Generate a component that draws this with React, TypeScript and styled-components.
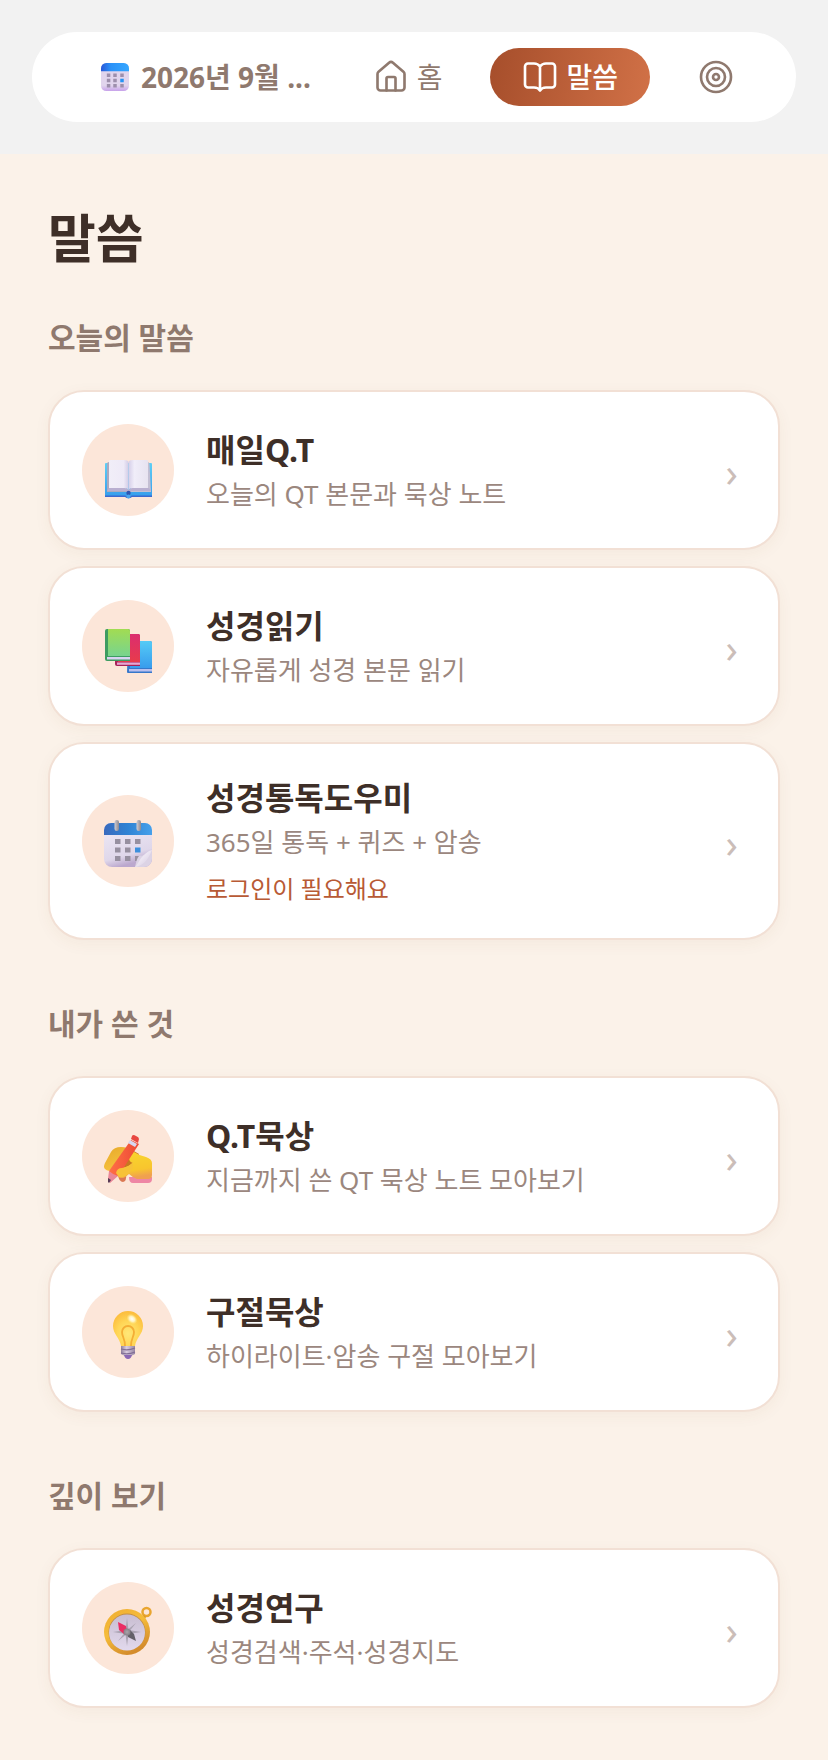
import React from "react";
import styled, { createGlobalStyle } from "styled-components";
import { House, Target } from "lucide-react";

const GlobalStyle = createGlobalStyle`
  *, *::before, *::after { box-sizing: border-box; }
  body {
    margin: 0;
    background: #fbf2e9;
    color: #3e2f28;
    font-family: "Noto Sans", "Noto Sans CJK KR", sans-serif;
  }
  h1, h2, h3, p, ul { margin: 0; padding: 0; }
  button { font: inherit; border: 0; background: none; cursor: pointer; }
`;

const Page = styled.div`
  min-height: 100vh;
  background: #fbf2e9;
`;

const TopBar = styled.header`
  padding: 32px;
  background: #f2f2f2;
`;

const Nav = styled.nav`
  display: flex;
  align-items: center;
  gap: 16px;
  height: 90px;
  padding: 16px 30px 16px 32px;
  border-radius: 45px;
  background: #fff;
`;

const NavButton = styled.button<{ $active?: boolean }>`
  display: flex;
  align-items: center;
  gap: 8px;
  height: 58px;
  padding: 0 32px;
  border-radius: 29px;
  font-size: 28px;
  line-height: 40px;
  font-weight: ${(p) => (p.$active ? 500 : 400)};
  color: ${(p) => (p.$active ? "#fff" : "#8f796e")};
  && { background: ${(p) => (p.$active ? "linear-gradient(100deg, #a64e2b, #d17147)" : "none")}; }
`;

const DateButton = styled(NavButton)`
  flex: 1;
  min-width: 0;
  gap: 12px;
  padding: 0 0 0 37px;
  font-weight: 700;
  white-space: nowrap;
`;

const Main = styled.main`
  padding: 48px 48px 54px;
`;

const PageTitle = styled.h1`
  margin-bottom: 44px;
  font-size: 52px;
  line-height: 72px;
  font-weight: 700;
`;

const Section = styled.section`
  & + & { margin-top: 64px; }
`;

const SectionTitle = styled.h2`
  margin-bottom: 32px;
  font-size: 30px;
  line-height: 40px;
  font-weight: 600;
  color: #8f796e;
`;

const CardList = styled.ul`
  display: flex;
  flex-direction: column;
  gap: 16px;
  list-style: none;
`;

const Card = styled.a`
  display: flex;
  align-items: center;
  gap: 32px;
  padding: 32px;
  border: 2px solid #f2e0d5;
  border-radius: 36px;
  background: #fff;
  box-shadow: 0 4px 16px rgba(120, 70, 40, 0.05);
  color: inherit;
  text-decoration: none;
`;

const IconCircle = styled.span`
  display: flex;
  flex: none;
  align-items: center;
  justify-content: center;
  width: 92px;
  height: 92px;
  padding-top: 6px;
  border-radius: 50%;
  background: #fce6d9;
`;

const CardText = styled.div`
  flex: 1;
  min-width: 0;
`;

const CardTitle = styled.h3`
  font-size: 32px;
  line-height: 44px;
  font-weight: 700;
`;

const CardDescription = styled.p`
  margin-top: 4px;
  font-size: 26px;
  line-height: 36px;
  color: #9b877e;
`;

const CardNote = styled.p`
  margin-top: 12px;
  font-size: 24px;
  line-height: 34px;
  color: #b85a35;
`;

const Chevron = styled.span`
  padding: 4px 8px 0;
  font-size: 40px;
  line-height: 48px;
  color: #cbbdb8;
`;

const OpenBook = () => (
  <svg
    width="36"
    height="36"
    viewBox="0 0 24 24"
    fill="none"
    stroke="currentColor"
    strokeWidth="1.750"
    strokeLinecap="round"
    strokeLinejoin="round"
    aria-hidden="true"
  >
    <path d="M12 5C11 3.600 9.600 3 8 3H4a2 2 0 0 0-2 2v12a2 2 0 0 0 2 2h4c1.700 0 3.200.6 4 2 .8-1.400 2.300-2 4-2h4a2 2 0 0 0 2-2V5a2 2 0 0 0-2-2h-4c-1.600 0-3 .6-4 2zv16" />
  </svg>
);

const Emoji = ({ size = 48, children }: { size?: number; children: React.ReactNode }) => (
  <svg width={size} height={size} viewBox="0 0 48 48" overflow="visible" aria-hidden="true">
    {children}
  </svg>
);

const DateEmoji = () => (
  <Emoji size={28}>
    <defs>
      <linearGradient id="dateTop">
        <stop stopColor="#2858d8" />
        <stop offset=".35" stopColor="#2b92f8" />
        <stop offset="1" stopColor="#35a7ff" />
      </linearGradient>
      <linearGradient id="dateBody" x2="0" y2="1">
        <stop offset=".8" stopColor="#e1d5ed" />
        <stop offset="1" stopColor="#c7a2ea" />
      </linearGradient>
    </defs>
    <rect width="48" height="48" rx="9" fill="url(#dateBody)" />
    <path d="M0 14V9a9 9 0 0 1 9-9h30a9 9 0 0 1 9 9v5z" fill="url(#dateTop)" />
    {[18, 27, 36].map((y) =>
      [10, 21, 33].map((x) => (
        <rect key={`${x}-${y}`} x={x} y={y} width="6" height="6" fill={x === 33 && y === 27 ? "#2694f5" : "#9d8fac"} />
      )),
    )}
  </Emoji>
);

const OpenBookEmoji = () => (
  <Emoji>
    <defs>
      <linearGradient id="bookCover" x2="0" y2="1">
        <stop stopColor="#5fcff5" />
        <stop offset="1" stopColor="#359cec" />
      </linearGradient>
      <linearGradient id="pageLeft">
        <stop stopColor="#f1eef8" />
        <stop offset=".75" stopColor="#eeeaf7" />
        <stop offset="1" stopColor="#d3cce6" />
      </linearGradient>
      <linearGradient id="pageRight">
        <stop stopColor="#d5cee8" />
        <stop offset=".3" stopColor="#f0edf9" />
        <stop offset="1" stopColor="#e7e3f0" />
      </linearGradient>
    </defs>
    <path d="M2 14h45a1 1 0 0 1 1 1v32H28q-3.500 3-7 0H1V15a1 1 0 0 1 1-1z" fill="url(#bookCover)" />
    <path d="M1 46.500h20q3.500 2 7 0h20V48H28q-3.500 2.500-7 0H1z" fill="#3b69cf" />
    <path d="M3 15q0-2 2-2v27h18.500v3H3z" fill="#aba9bf" />
    <path d="M45.500 15q0-2-2-2v27H26v3h21z" fill="#c4bfd3" />
    <path d="M5 39h17l2.500 2 2.500-2h18l2 3H28l-3.500 2-3.500-2H3z" fill="#b9afd0" />
    <path d="M5 12q0-1 1-1h14q4 0 4.500 2v28q-1-2-4-2H5z" fill="url(#pageLeft)" />
    <path d="M44 12q0-1-1-1H29q-4 0-4.500 2v28q1-2 4-2H44z" fill="url(#pageRight)" />
    <circle cx="24.500" cy="44" r="2.200" fill="#2e55b0" />
    <circle cx="24.500" cy="47.500" r="2" fill="#48a4ed" />
  </Emoji>
);

const BooksEmoji = () => (
  <Emoji>
    <defs>
      <linearGradient id="bookBlue" x2="0" y2="1">
        <stop stopColor="#55cbf6" />
        <stop offset="1" stopColor="#389ced" />
      </linearGradient>
      <linearGradient id="bookRed" x2="0" y2="1">
        <stop stopColor="#db2d70" />
        <stop offset="1" stopColor="#e83b4b" />
      </linearGradient>
      <linearGradient id="bookGreen" x2="0" y2="1">
        <stop stopColor="#a2dc52" />
        <stop offset="1" stopColor="#78d48e" />
      </linearGradient>
    </defs>
    <path d="M24 16h22a2 2 0 0 1 2 2v30H24a1 1 0 0 1-1-1z" fill="#3677ca" />
    <path d="M26 16h20a2 2 0 0 1 2 2v25H26z" fill="url(#bookBlue)" />
    <path d="M25 44h23v2.500H25z" fill="#b8bfef" />
    <path d="M11 9h23a2 2 0 0 1 2 2v30H13a2 2 0 0 1-2-2z" fill="#a92158" />
    <path d="M14 9h20a2 2 0 0 1 2 2v26H14z" fill="url(#bookRed)" />
    <path d="M13 37.500h23v2.300H13z" fill="#e6a8d2" />
    <path d="M3 4h21a2 2 0 0 1 2 2v30H3a2 2 0 0 1-2-2V6a2 2 0 0 1 2-2z" fill="#3e9c62" />
    <path d="M4 4h20a2 2 0 0 1 2 2v25H4z" fill="url(#bookGreen)" />
    <path d="M3 32h23v2.500H3z" fill="#d9d3f1" />
  </Emoji>
);

const CalendarEmoji = () => (
  <Emoji>
    <defs>
      <linearGradient id="calTop">
        <stop stopColor="#3869bd" />
        <stop offset=".5" stopColor="#2f83d4" />
        <stop offset="1" stopColor="#45a0eb" />
      </linearGradient>
      <linearGradient id="calBody" x2=".3" y2="1">
        <stop stopColor="#f0ebf6" />
        <stop offset=".8" stopColor="#dfd7ea" />
        <stop offset="1" stopColor="#bba8ce" />
      </linearGradient>
      <linearGradient id="calRing">
        <stop stopColor="#d0ccd2" />
        <stop offset="1" stopColor="#8c8891" />
      </linearGradient>
      <linearGradient id="calFold" x2="1" y2="1">
        <stop stopColor="#c9bcd5" />
        <stop offset=".45" stopColor="#ece6f2" />
        <stop offset="1" stopColor="#d0c5de" />
      </linearGradient>
    </defs>
    <path d="M0 10a7 7 0 0 1 7-7h34a7 7 0 0 1 7 7v29a8 8 0 0 1-8 8H8a8 8 0 0 1-8-8z" fill="url(#calBody)" />
    <path d="M0 15v-5a7 7 0 0 1 7-7h34a7 7 0 0 1 7 7v5z" fill="url(#calTop)" />
    {[19, 27.5, 36].map((y) =>
      [11, 21, 31].map((x) => (
        <rect key={`${x}-${y}`} x={x} y={y} width="5.500" height="5" fill={x === 31 && y === 27.5 ? "#3c8fdd" : "#9790a0"} />
      )),
    )}
    <path d="M31 47c1-4 2-9 4-11 3-1 6 1 13-6v9a8 8 0 0 1-8 8z" fill="#dcd3e5" />
    <path d="M48 30c-4 1-8 4-11 8-2 3-3 6-6 9 8-1 13-7 17-17z" fill="url(#calFold)" />
    <rect x="10.500" width="4.500" height="11" rx="2.200" fill="url(#calRing)" />
    <rect x="32.500" width="4.500" height="11" rx="2.200" fill="url(#calRing)" />
  </Emoji>
);

const WritingEmoji = () => (
  <Emoji>
    <defs>
      <linearGradient id="handBack" x2=".5" y2="1">
        <stop stopColor="#e7a92a" />
        <stop offset="1" stopColor="#f7c340" />
      </linearGradient>
      <linearGradient id="handFront" x2=".2" y2="1">
        <stop stopColor="#f8d72e" />
        <stop offset=".75" stopColor="#f8c52e" />
        <stop offset="1" stopColor="#f0a050" />
      </linearGradient>
      <linearGradient id="pencil">
        <stop stopColor="#ff7045" />
        <stop offset="1" stopColor="#ec4935" />
      </linearGradient>
    </defs>
    <path d="M25 42h23v2q0 4-4 4H29q-4 0-4-6z" fill="#ee86a4" />
    <path d="M14 40l8-1q1 7-3 8-4 0-5-7z" fill="#db7853" />
    <path d="M1 34q-2-2 0-6l6-11q3-5 10-5 7 0 10 4l1 17-10 3-5-7-6 6q-3 2-6-1z" fill="url(#handBack)" />
    <path d="M13 31q3-7 7-12l8-4 7 4-4 11-14 7z" fill="#c87821" />
    <path d="M25 19q1-3 5-2 6 4 12 5 6 2 6 6v12q0 4-4 4H33q-5-2-8-5-3 3-6 4-6 0-6-4 0-5 6-6 5-1 10-5-4-1-4-5z" fill="url(#handFront)" />
    <path d="M27 5l8 4-20 31-9 5-1-9z" fill="url(#pencil)" />
    <path d="M5 36q3 3 9 5l-8 7-2-4z" fill="#e98798" />
    <path d="M4 43l3 2-2 3-1-1z" fill="#563954" />
    <path d="M26 5l7 4-2 3-7-4z" fill="#d8d7f0" />
    <path d="M28 1q1-2 4 0 3 1 3 3l-1 4-7-4z" fill="#e84741" />
    <path d="M12 38q1-5 6-5 7-1 11-6 1 8-6 13-4 3-8 2z" fill="#f7c238" />
  </Emoji>
);

const BulbEmoji = () => (
  <Emoji>
    <defs>
      <radialGradient id="bulbGlass" cx=".5" cy=".65" r=".65">
        <stop stopColor="#ffe778" />
        <stop offset=".55" stopColor="#ffd656" />
        <stop offset="1" stopColor="#fcbc3c" />
      </radialGradient>
      <radialGradient id="bulbShine">
        <stop stopColor="#fff" />
        <stop offset=".5" stopColor="#fff3be" />
        <stop offset="1" stopColor="#ffe887" stopOpacity="0" />
      </radialGradient>
      <linearGradient id="bulbBase">
        <stop stopColor="#8f7f9d" />
        <stop offset=".4" stopColor="#d9cce0" />
        <stop offset="1" stopColor="#9686a4" />
      </linearGradient>
    </defs>
    <path d="M24 0a15 15 0 0 1 15 15c0 8-7 12-8 20H17c-1-8-8-12-8-20A15 15 0 0 1 24 0z" fill="url(#bulbGlass)" />
    <path d="M21 35c0-8-3-9-3-14a6 6 0 0 1 12 0c0 5-3 6-3 14" fill="none" stroke="#f4ae35" strokeWidth="1.800" />
    <ellipse cx="28" cy="8" rx="6" ry="4.500" transform="rotate(40 28 8)" fill="url(#bulbShine)" />
    <path d="M17 35h14v8l-4 2q-1 3-3 3t-3-3l-4-2z" fill="url(#bulbBase)" />
    <path d="M17 38q7 2 14-1M17 42q7 2 14-1" fill="none" stroke="#806e95" strokeWidth="1.200" />
    <path d="M20 44h8q-1 4-4 4t-4-4z" fill="#8b68b4" />
  </Emoji>
);

const CompassEmoji = () => (
  <Emoji>
    <defs>
      <linearGradient id="compassGold" x2=".5" y2="1">
        <stop stopColor="#efad32" />
        <stop offset=".5" stopColor="#f5bc39" />
        <stop offset="1" stopColor="#d48c2c" />
      </linearGradient>
      <linearGradient id="compassFace" x2="0" y2="1">
        <stop stopColor="#c8bdd1" />
        <stop offset="1" stopColor="#e2d9ed" />
      </linearGradient>
      <radialGradient id="compassHub">
        <stop stopColor="#aaa4ab" />
        <stop offset="1" stopColor="#858087" />
      </radialGradient>
    </defs>
    <circle cx="42.500" cy="5" r="4" fill="none" stroke="#e9a52f" strokeWidth="2.500" />
    <path d="M37 10l3-2 2 2-2 4z" fill="#dc982a" />
    <circle cx="23" cy="25" r="23" fill="url(#compassGold)" />
    <circle cx="23" cy="25" r="18.500" fill="#c08c48" />
    <circle cx="23" cy="25.500" r="18" fill="url(#compassFace)" />
    <path d="M23 11l1.500 12 12.500 2-12.500 2L23 39l-1.500-12L9 25l12.500-2z" fill="#aaa3b2" />
    <path d="M32 16l-8 10-2-2zM14 34l8-10 2 2z" fill="#aaa3b2" />
    <path d="M14 15l8 4 1 5-3 3-5-4z" fill="#ea2d63" />
    <path d="M32 34l-8-4-1-5 3-2 4 4z" fill="#636068" />
    <circle cx="23" cy="25" r="3.500" fill="url(#compassHub)" />
  </Emoji>
);

type Item = { title: string; description: string; note?: string; icon: React.ReactNode };

const sections: { title: string; items: Item[] }[] = [
  {
    title: "오늘의 말씀",
    items: [
      { title: "매일Q.T", description: "오늘의 QT 본문과 묵상 노트", icon: <OpenBookEmoji /> },
      { title: "성경읽기", description: "자유롭게 성경 본문 읽기", icon: <BooksEmoji /> },
      {
        title: "성경통독도우미",
        description: "365일 통독 + 퀴즈 + 암송",
        note: "로그인이 필요해요",
        icon: <CalendarEmoji />,
      },
    ],
  },
  {
    title: "내가 쓴 것",
    items: [
      { title: "Q.T묵상", description: "지금까지 쓴 QT 묵상 노트 모아보기", icon: <WritingEmoji /> },
      { title: "구절묵상", description: "하이라이트·암송 구절 모아보기", icon: <BulbEmoji /> },
    ],
  },
  {
    title: "깊이 보기",
    items: [{ title: "성경연구", description: "성경검색·주석·성경지도", icon: <CompassEmoji /> }],
  },
];

export default function App() {
  return (
    <Page>
      <GlobalStyle />
      <TopBar>
        <Nav>
          <DateButton type="button">
            <DateEmoji />
            2026년 9월 ...
          </DateButton>
          <NavButton type="button">
            <House size={36} strokeWidth={1.75} />홈
          </NavButton>
          <NavButton type="button" $active aria-current="page">
            <OpenBook />
            말씀
          </NavButton>
          <NavButton type="button" aria-label="목표">
            <Target size={36} strokeWidth={1.75} />
          </NavButton>
        </Nav>
      </TopBar>
      <Main>
        <PageTitle>말씀</PageTitle>
        {sections.map((section) => (
          <Section key={section.title}>
            <SectionTitle>{section.title}</SectionTitle>
            <CardList>
              {section.items.map((item) => (
                <li key={item.title}>
                  <Card href="#">
                    <IconCircle>{item.icon}</IconCircle>
                    <CardText>
                      <CardTitle>{item.title}</CardTitle>
                      <CardDescription>{item.description}</CardDescription>
                      {item.note && <CardNote>{item.note}</CardNote>}
                    </CardText>
                    <Chevron aria-hidden="true">›</Chevron>
                  </Card>
                </li>
              ))}
            </CardList>
          </Section>
        ))}
      </Main>
    </Page>
  );
}
